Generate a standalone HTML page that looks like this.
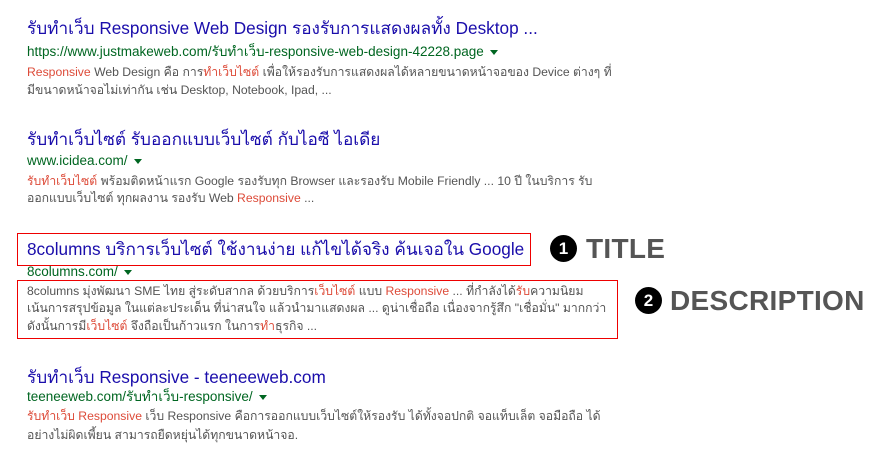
<!DOCTYPE html>
<html><head><meta charset="utf-8"><style>
body{margin:0;width:888px;height:462px;background:#fff;position:relative;overflow:hidden;font-family:"Liberation Sans",Arial,sans-serif}
.l{position:absolute;white-space:nowrap}
.t{left:27px;font-size:17.2px;color:#1a0dab;line-height:22px}
.u{left:27px;font-size:13.5px;color:#006621;line-height:16px}
.u:after{content:"";display:inline-block;margin-left:6px;vertical-align:middle;border-left:4px solid transparent;border-right:4px solid transparent;border-top:5px solid #006621}
.s{left:27px;font-size:12.2px;color:#545454;line-height:16px}
.r{color:#dd4b39}
.box{position:absolute;border:1.5px solid #e00;box-sizing:border-box}
.c{position:absolute;width:27px;height:27px;border-radius:50%;background:#000;color:#fff;font-weight:bold;font-size:17px;text-align:center;line-height:27px}
.lab{position:absolute;font-weight:bold;color:#555;font-size:28px;line-height:30px;letter-spacing:0.3px}
</style></head><body>
<div class="l t" style="top:17px">รับทำเว็บ Responsive Web Design รองรับการแสดงผลทั้ง Desktop ...</div>
<div class="l u" style="top:44px">https://www.justmakeweb.com/รับทำเว็บ-responsive-web-design-42228.page</div>
<div class="l s" style="top:64px"><span class="r">Responsive</span> Web Design คือ การ<span class="r">ทำเว็บไซต์</span> เพื่อให้รองรับการแสดงผลได้หลายขนาดหน้าจอของ Device ต่างๆ ที่</div>
<div class="l s" style="top:82px">มีขนาดหน้าจอไม่เท่ากัน เช่น Desktop, Notebook, Ipad, ...</div>

<div class="l t" style="top:128px">รับทำเว็บไซต์ รับออกแบบเว็บไซต์ กับไอซี ไอเดีย</div>
<div class="l u" style="top:153px">www.icidea.com/</div>
<div class="l s" style="top:173px"><span class="r">รับทำเว็บไซต์</span> พร้อมติดหน้าแรก Google รองรับทุก Browser และรองรับ Mobile Friendly ... 10 ปี ในบริการ รับ</div>
<div class="l s" style="top:190px">ออกแบบเว็บไซต์ ทุกผลงาน รองรับ Web <span class="r">Responsive</span> ...</div>

<div class="box" style="left:17px;top:233px;width:514px;height:33px"></div>
<div class="l t" style="top:238px">8columns บริการเว็บไซต์ ใช้งานง่าย แก้ไขได้จริง ค้นเจอใน Google</div>
<div class="l u" style="top:264px">8columns.com/</div>
<div class="box" style="left:17px;top:280px;width:601px;height:59px"></div>
<div class="l s" style="top:283px">8columns มุ่งพัฒนา SME ไทย สู่ระดับสากล ด้วยบริการ<span class="r">เว็บไซต์</span> แบบ <span class="r">Responsive</span> ... ที่กำลังได้<span class="r">รับ</span>ความนิยม</div>
<div class="l s" style="top:300px">เน้นการสรุปข้อมูล ในแต่ละประเด็น ที่น่าสนใจ แล้วนำมาแสดงผล ... ดูน่าเชื่อถือ เนื่องจากรู้สึก "เชื่อมั่น" มากกว่า</div>
<div class="l s" style="top:318px">ดังนั้นการมี<span class="r">เว็บไซต์</span> จึงถือเป็นก้าวแรก ในการ<span class="r">ทำ</span>ธุรกิจ ...</div>

<div class="c" style="left:550px;top:235px">1</div>
<div class="lab" style="left:586px;top:234px">TITLE</div>
<div class="c" style="left:635px;top:287px">2</div>
<div class="lab" style="left:670px;top:286px">DESCRIPTION</div>

<div class="l t" style="top:366px">รับทำเว็บ Responsive - teeneeweb.com</div>
<div class="l u" style="top:389px">teeneeweb.com/รับทำเว็บ-responsive/</div>
<div class="l s" style="top:408px"><span class="r">รับทำเว็บ Responsive</span> เว็บ Responsive คือการออกแบบเว็บไซต์ให้รองรับ ได้ทั้งจอปกติ จอแท็บเล็ต จอมือถือ ได้</div>
<div class="l s" style="top:427px">อย่างไม่ผิดเพี้ยน สามารถยืดหยุ่นได้ทุกขนาดหน้าจอ.</div>
</body></html>
